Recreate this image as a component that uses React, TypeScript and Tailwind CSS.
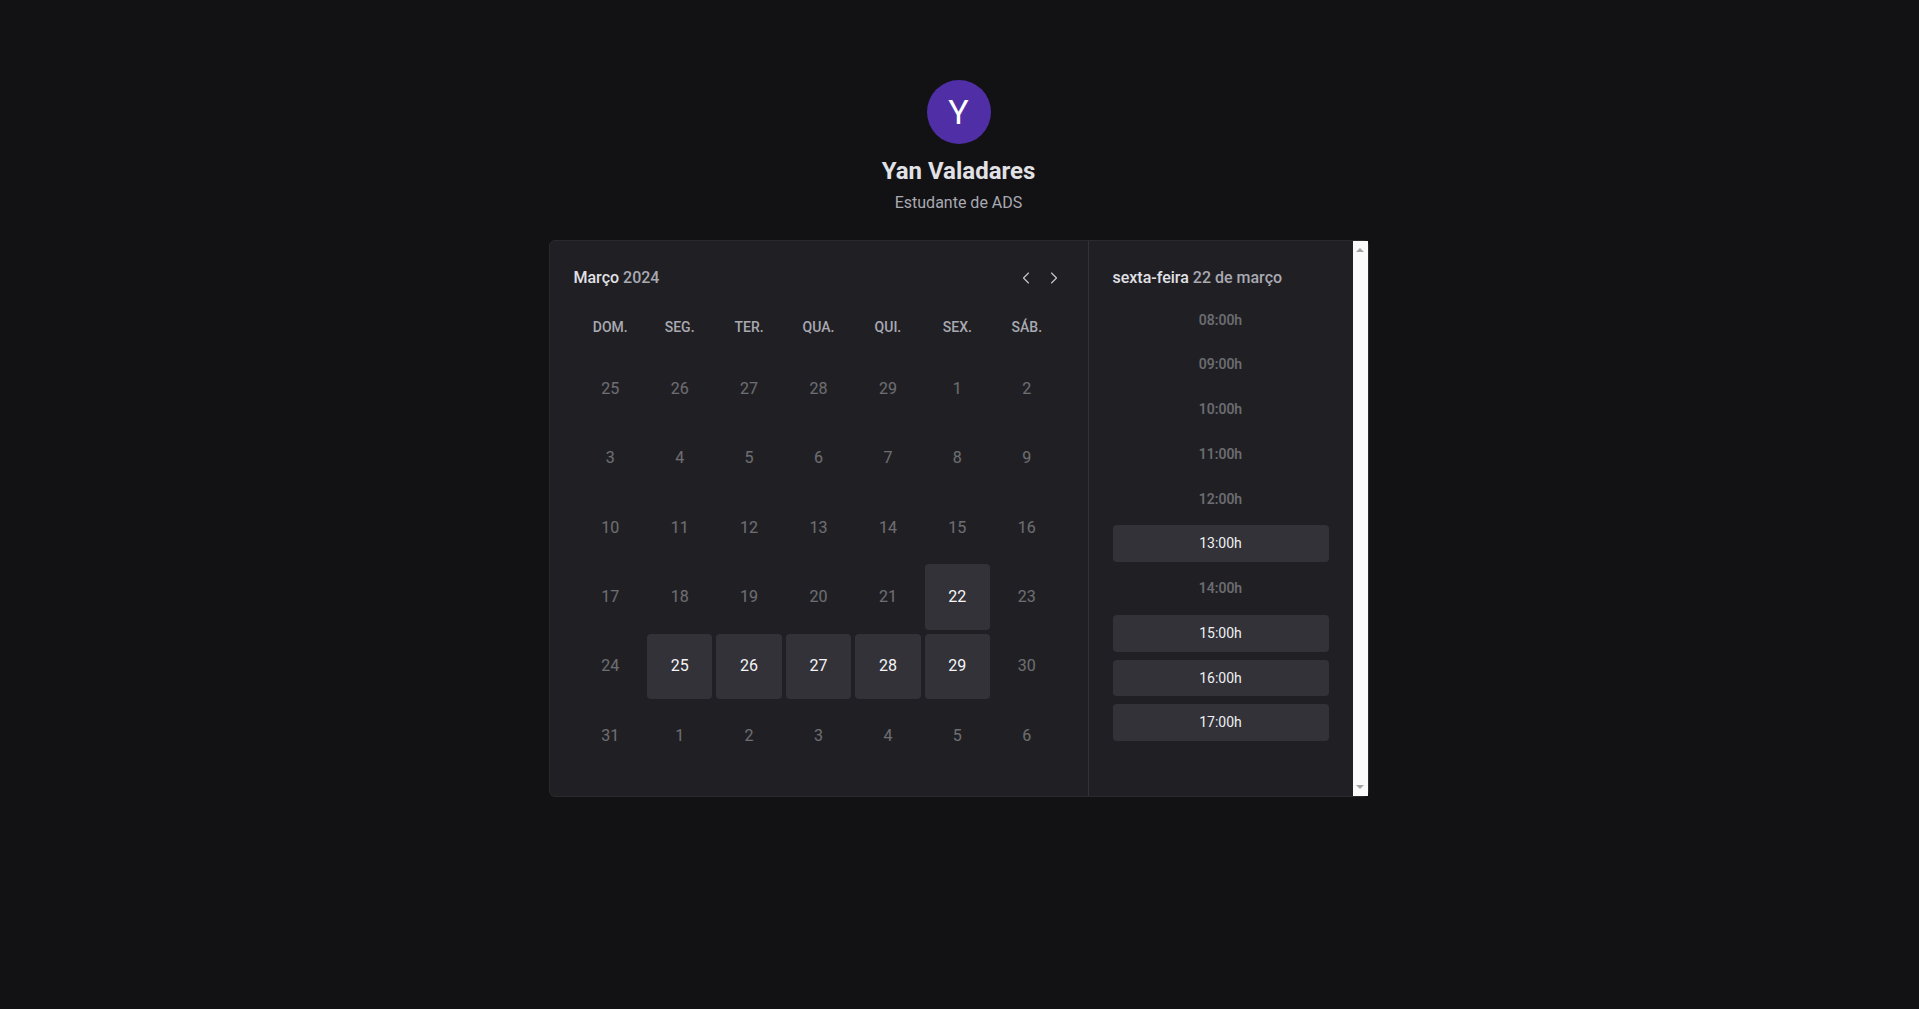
import { ChevronLeft, ChevronRight } from "lucide-react";

const FONT = "Roboto, 'Noto Sans', sans-serif";

const WEEK = ["DOM.", "SEG.", "TER.", "QUA.", "QUI.", "SEX.", "SÁB."];

const WEEKS = [
  [25, 26, 27, 28, 29, 1, 2],
  [3, 4, 5, 6, 7, 8, 9],
  [10, 11, 12, 13, 14, 15, 16],
  [17, 18, 19, 20, 21, 22, 23],
  [24, 25, 26, 27, 28, 29, 30],
  [31, 1, 2, 3, 4, 5, 6],
];

// days that can still be booked (row, col)
const AVAILABLE = ["3-5", "4-1", "4-2", "4-3", "4-4", "4-5"];

const TIMES = [
  { label: "08:00h", open: false },
  { label: "09:00h", open: false },
  { label: "10:00h", open: false },
  { label: "11:00h", open: false },
  { label: "12:00h", open: false },
  { label: "13:00h", open: true },
  { label: "14:00h", open: false },
  { label: "15:00h", open: true },
  { label: "16:00h", open: true },
  { label: "17:00h", open: true },
];

function Calendar() {
  return (
    <div className="flex flex-col px-6 pt-6 pb-[23px]">
      <div className="flex h-[26px] items-center justify-between">
        <h2 className="text-base leading-[1.6] font-medium text-[#e1e1e6]">
          Março <span className="text-[#a9a9b2]">2024</span>
        </h2>
        <div className="flex items-center gap-2 text-[#c4c4cc]">
          <button className="flex h-5 w-5 items-center justify-center">
            <ChevronLeft size={22} strokeWidth={1.4} />
          </button>
          <button className="flex h-5 w-5 items-center justify-center">
            <ChevronRight size={22} strokeWidth={1.4} />
          </button>
        </div>
      </div>

      <div className="mt-[26px] grid grid-cols-7 gap-1 px-1">
        {WEEK.map((d) => (
          <div
            key={d}
            className="text-center text-sm leading-5 font-medium text-[#a9a9b2]"
          >
            {d}
          </div>
        ))}
      </div>

      <div className="mt-[19px] grid grid-cols-7 gap-1 px-1 pb-1">
        {WEEKS.map((week, r) =>
          week.map((day, c) => {
            const open = AVAILABLE.includes(`${r}-${c}`);
            return (
              <button
                key={`${r}-${c}`}
                className={
                  open
                    ? "flex aspect-square w-full items-center justify-center rounded bg-[#323238] text-base text-[#f5f5f7]"
                    : "flex aspect-square w-full items-center justify-center text-base text-[#e1e1e6] opacity-40"
                }
              >
                {day}
              </button>
            );
          })
        )}
      </div>
    </div>
  );
}

function TimePicker() {
  return (
    <div className="flex border-l border-[#323238]">
      <div className="flex-1 px-6 pt-6">
        <h3 className="text-base leading-[1.6] font-medium text-[#e1e1e6]">
          sexta-feira <span className="text-[#a9a9b2]">22 de março</span>
        </h3>
        <div className="mt-[11px] flex flex-col gap-2">
          {TIMES.map((t) => (
            <button
              key={t.label}
              className={
                t.open
                  ? "rounded bg-[#323238] py-2 text-sm leading-[20.75px] text-[#f0f0f3]"
                  : "py-2 text-sm leading-[20.75px] font-medium text-[#e1e1e6] opacity-40"
              }
            >
              {t.label}
            </button>
          ))}
        </div>
      </div>
      {/* scroll track */}
      <div className="flex w-[15px] flex-col items-center justify-between bg-[#fafafa] py-[7px]">
        <div className="h-0 w-0 border-x-[4px] border-b-[4px] border-x-transparent border-b-[#a3a3a3]" />
        <div className="h-0 w-0 border-x-[4px] border-t-[4px] border-x-transparent border-t-[#a3a3a3]" />
      </div>
    </div>
  );
}

export default function App() {
  return (
    <div
      className="min-h-screen bg-[#121214] pt-20 pr-[2px]"
      style={{ fontFamily: FONT }}
    >
      <div className="flex flex-col items-center">
        <div className="flex h-16 w-16 items-center justify-center rounded-full bg-[#4f2ea6] text-[34px] text-white">
          Y
        </div>
        <h1 className="mt-2 text-2xl leading-[1.6] font-bold text-[#e1e1e6]">
          Yan Valadares
        </h1>
        <p className="text-base leading-[1.6] text-[#a9a9b2]">
          Estudante de ADS
        </p>
      </div>

      <div className="mx-auto mt-6 grid w-[820px] grid-cols-[1fr_280px] rounded-md border border-[#29292e] bg-[#202024]">
        <Calendar />
        <TimePicker />
      </div>
    </div>
  );
}
